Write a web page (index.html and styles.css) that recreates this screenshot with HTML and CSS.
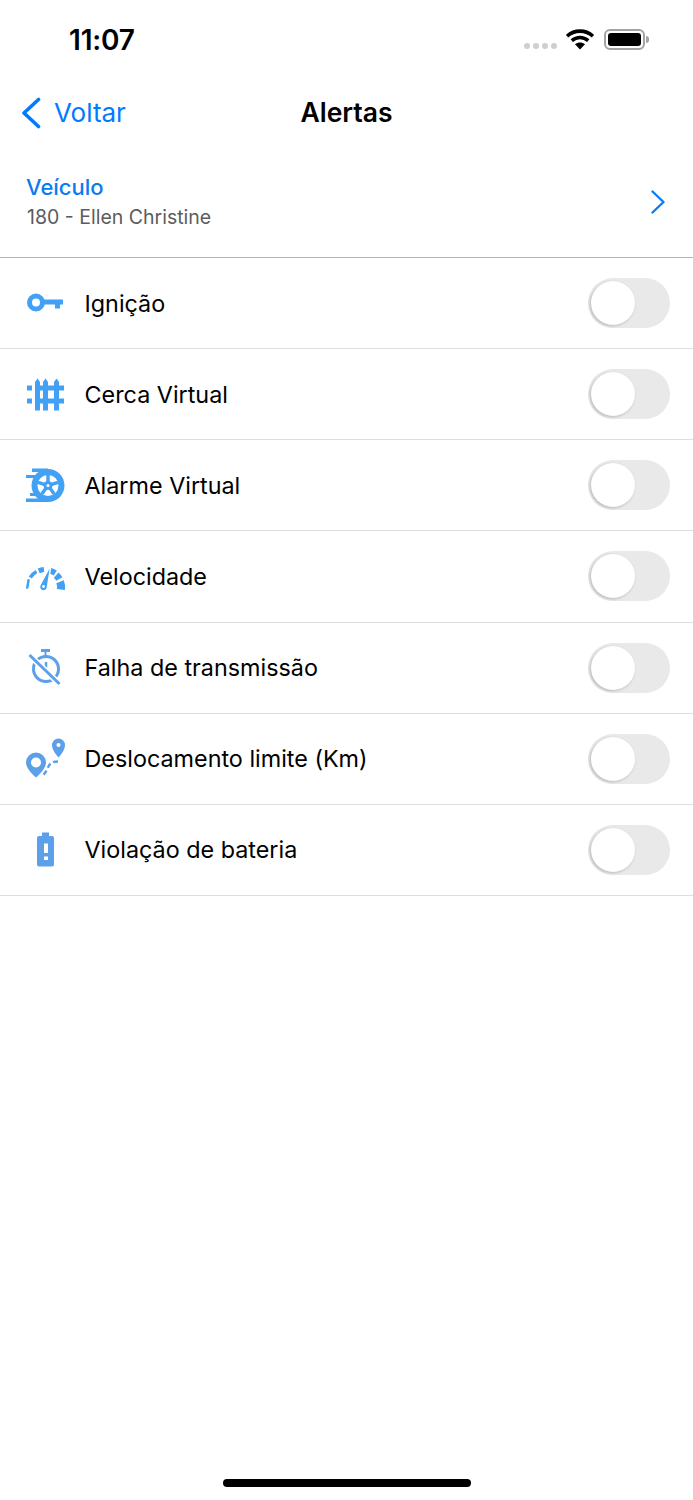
FILE: index.html
```html
<!DOCTYPE html>
<html lang="pt">
<head>
<meta charset="utf-8">
<title>Alertas</title>
<link rel="stylesheet" href="styles.css">
</head>
<body>
<div class="status">
  <span class="time">11:07</span>
  <div class="status-right">
    <div class="dots"><i></i><i></i><i></i><i></i></div>
    <svg class="wifi" width="28" height="21" viewBox="0 0 28 21"><path d="M1 7.2C8.400.4 19.600.4 27 7.200" fill="none" stroke="#000" stroke-width="3.600"/><path d="M5.800 11.600c4.800-4.200 11.600-4.200 16.400 0" fill="none" stroke="#000" stroke-width="3.400"/><path d="M9 15.200c3-2.200 7-2.200 10 0l-5 5.300z" fill="#000"/></svg>
    <div class="battery"><div class="battery-fill"></div></div>
    <div class="battery-cap"></div>
  </div>
</div>
<header class="nav">
  <div class="back">
    <svg width="22" height="32" viewBox="0 0 22 32"><path d="M18.500 2.500 4 16l14.500 13.500" fill="none" stroke="#007aff" stroke-width="3.600" stroke-linecap="round" stroke-linejoin="round"/></svg>
    <span>Voltar</span>
  </div>
  <h1 class="title">Alertas</h1>
</header>
<section class="vehicle">
  <div>
    <div class="vehicle-label">Veículo</div>
    <div class="vehicle-name">180 - Ellen Christine</div>
  </div>
  <svg width="16" height="24" viewBox="0 0 16 24"><path d="M2.500 1.500 13.500 12 2.500 22.500" fill="none" stroke="#0a7cf5" stroke-width="2.400" stroke-linecap="round" stroke-linejoin="round"/></svg>
</section>
<ul class="list">
  <li class="row">
    <svg class="icon" viewBox="0 0 41 41"><circle cx="11" cy="19.500" r="6.500" fill="none" stroke="#42a1f5" stroke-width="5"/><path d="M18 16.500h20v5h-3v4h-5v-4H18z" fill="#42a1f5"/></svg>
    <span class="label">Ignição</span><span class="switch"><span class="knob"></span></span>
  </li>
  <li class="row">
    <svg class="icon" viewBox="0 0 41 41" fill="#42a1f5"><path d="M10 8l2.500-3.500L15 8v28.500h-5zM18 8l2.500-3.500L23 8v28.500h-5zM29 8l2.500-3.500L34 8v28.500h-5z"/><path d="M2 11.500h5v5H2zM2 24.500h5v5H2zM15 11.500h3v5h-3zM15 24.500h3v5h-3zM23 11.500h6v5h-6zM23 24.500h6v5h-6zM34 11.500h5v5h-5zM34 24.500h5v5h-5z"/></svg>
    <span class="label">Cerca Virtual</span><span class="switch"><span class="knob"></span></span>
  </li>
  <li class="row">
    <svg class="icon" viewBox="0 0 41 41"><circle cx="23" cy="20.500" r="16.500" fill="#42a1f5"/><circle cx="23" cy="20.500" r="10.500" fill="#fff"/><path d="M23 10v7M13 17.300l7 2.300M33 17.300l-7 2.300M16.800 29l4.300-6M29.200 29l-4.300-6" stroke="#42a1f5" stroke-width="3.400"/><circle cx="23" cy="20.500" r="4.500" fill="#42a1f5"/><circle cx="23" cy="20.500" r="1.500" fill="#fff"/><path d="M7 3.500h16V7H7zM1 10h12v3H1zM5 28h8v3H5zM1 33.500h22V37H1z" fill="#42a1f5"/></svg>
    <span class="label">Alarme Virtual</span><span class="switch"><span class="knob"></span></span>
  </li>
  <li class="row">
    <svg class="icon" viewBox="0 0 41 41"><g fill="none" stroke="#42a1f5"><path d="M2.100 32.600 3.730 23.180" stroke-width="2.500"/><path d="M5.240 21.460A18 18 0 0 1 11.500 15.410" stroke-width="3.500"/><path d="M13.660 14.890A17.500 17.500 0 0 1 18.970 13.570" stroke-width="5"/><path d="M24.900 14.580A17 17 0 0 1 30.250 17.070" stroke-width="6"/><path d="M31.200 19.110A16 16 0 0 1 34.360 23" stroke-width="7"/><path d="M35.070 25.700A15.500 15.500 0 0 1 36 33.500" stroke-width="8"/></g><path d="M26 8.500 22.500 31a4 4 0 1 1-7.500-2z" fill="#42a1f5" stroke="#fff" stroke-width="1.500"/><circle cx="18.500" cy="30.500" r="1.400" fill="#fff"/></svg>
    <span class="label">Velocidade</span><span class="switch"><span class="knob"></span></span>
  </li>
  <li class="row">
    <svg class="icon" viewBox="0 0 41 41"><path d="M16 2h9v3h-9z" fill="#5ba0e8"/><path d="M20.500 5v4" stroke="#5ba0e8" stroke-width="2"/><circle cx="21" cy="22" r="12.500" fill="none" stroke="#5ba0e8" stroke-width="3"/><path d="M21 15v6" stroke="#5ba0e8" stroke-width="2.500"/><path d="M4.500 8 34.500 37" stroke="#fff" stroke-width="6"/><path d="M4.500 8 34.500 37" stroke="#5ba0e8" stroke-width="3"/></svg>
    <span class="label">Falha de transmissão</span><span class="switch"><span class="knob"></span></span>
  </li>
  <li class="row">
    <svg class="icon" viewBox="0 0 41 41"><path d="M11 14.500a10 10 0 0 1 10 10c0 5.500-5.500 11-10 15-4.500-4-10-9.500-10-15a10 10 0 0 1 10-10z" fill="#5ba0e8"/><circle cx="11" cy="24.500" r="5" fill="#fff"/><path d="M33.500.5A6.500 6.500 0 0 1 40 7c0 4.500-3.500 9-6.500 12.500C30.500 16 27 11.500 27 7A6.500 6.500 0 0 1 33.500.5z" fill="#5ba0e8"/><circle cx="33.500" cy="7" r="2" fill="#fff"/><path d="M33 23.500c-4 0-7 .8-9 4-2 3.500-3 8-8 11" fill="none" stroke="#5ba0e8" stroke-width="2.400" stroke-dasharray="5 3"/></svg>
    <span class="label">Deslocamento limite (Km)</span><span class="switch"><span class="knob"></span></span>
  </li>
  <li class="row">
    <svg class="icon" viewBox="0 0 41 41"><path d="M17 3.500h7V7h3a2 2 0 0 1 2 2v26.500a2 2 0 0 1-2 2H14a2 2 0 0 1-2-2V9a2 2 0 0 1 2-2h3z" fill="#5ba0e8"/><path d="M19 14.500h4V24h-4zM19 27.500h4v3.500h-4z" fill="#fff"/></svg>
    <span class="label">Violação de bateria</span><span class="switch"><span class="knob"></span></span>
  </li>
</ul>
<div class="home-indicator"></div>
</body>
</html>
```

FILE: styles.css
```css
* { box-sizing: border-box; }
html, body { margin: 0; padding: 0; }
body {
  width: 693px;
  height: 1500px;
  background: #fff;
  color: #000;
  font-family: Inter, "Liberation Sans", sans-serif;
  position: relative;
  overflow: hidden;
}
.status {
  height: 75px;
  display: flex;
  justify-content: space-between;
  align-items: flex-start;
  padding: 24px 44px 0 69px;
}
.time { font-size: 28px; line-height: 33px; font-weight: 600; letter-spacing: -0.2px; }
.status-right { display: flex; align-items: flex-start; padding-top: 6px; }
.dots { display: flex; gap: 3px; margin: 13px 9px 0 0; }
.dots i { width: 6px; height: 6px; border-radius: 50%; background: #cfcfcf; display: block; }
.wifi { margin: -1px 10px 0 0; }
.battery { width: 41px; height: 21px; border: 2px solid #a3a3a3; border-radius: 6px; padding: 2px; margin-top: -1px; }
.battery-fill { height: 100%; background: #000; border-radius: 3px; }
.battery-cap { width: 3px; height: 7px; margin: 6px 0 0 1px; background: #a3a3a3; border-radius: 0 3px 3px 0; }
.nav {
  height: 72px;
  position: relative;
  display: flex;
  align-items: center;
  justify-content: center;
}
.back {
  position: absolute;
  left: 20px;
  top: 21px;
  display: flex;
  align-items: center;
  gap: 12px;
  color: #007aff;
  font-size: 26px;
  line-height: 32px;
}
.back span { padding-top: 1px; }
.title { margin: 0; padding-top: 1px; font-size: 26.500px; line-height: 32px; font-weight: 600; }
.vehicle {
  height: 111px;
  border-bottom: 1px solid #b4b4b4;
  padding: 0 27px 0 26px;
  display: flex;
  justify-content: space-between;
  align-items: center;
}
.vehicle-label { color: #0a7cf0; font-size: 22px; line-height: 28px; font-weight: 500; }
.vehicle-name { color: #5c5c5c; font-size: 19.500px; line-height: 28px; margin-top: 2px; padding-left: 1px; }
.list { list-style: none; margin: 0; padding: 0; }
.row {
  height: 91.140px;
  display: flex;
  align-items: center;
  border-bottom: 1px solid #dedede;
  padding: 0 23px 0 25px;
}
.icon { width: 41px; height: 41px; flex: none; margin-right: 18.500px; }
.label { flex: 1; font-size: 23.350px; }
.switch {
  width: 82px;
  height: 50px;
  border-radius: 25px;
  background: #e9e9e9;
  position: relative;
  flex: none;
}
.knob {
  position: absolute;
  left: 3px;
  top: 3px;
  width: 44px;
  height: 44px;
  border-radius: 50%;
  background: #fff;
  box-shadow: -1px 1px 3px rgba(0,0,0,.22);
}
.home-indicator {
  position: absolute;
  left: 223px;
  top: 1479px;
  width: 248px;
  height: 8px;
  border-radius: 4px;
  background: #000;
}
```
